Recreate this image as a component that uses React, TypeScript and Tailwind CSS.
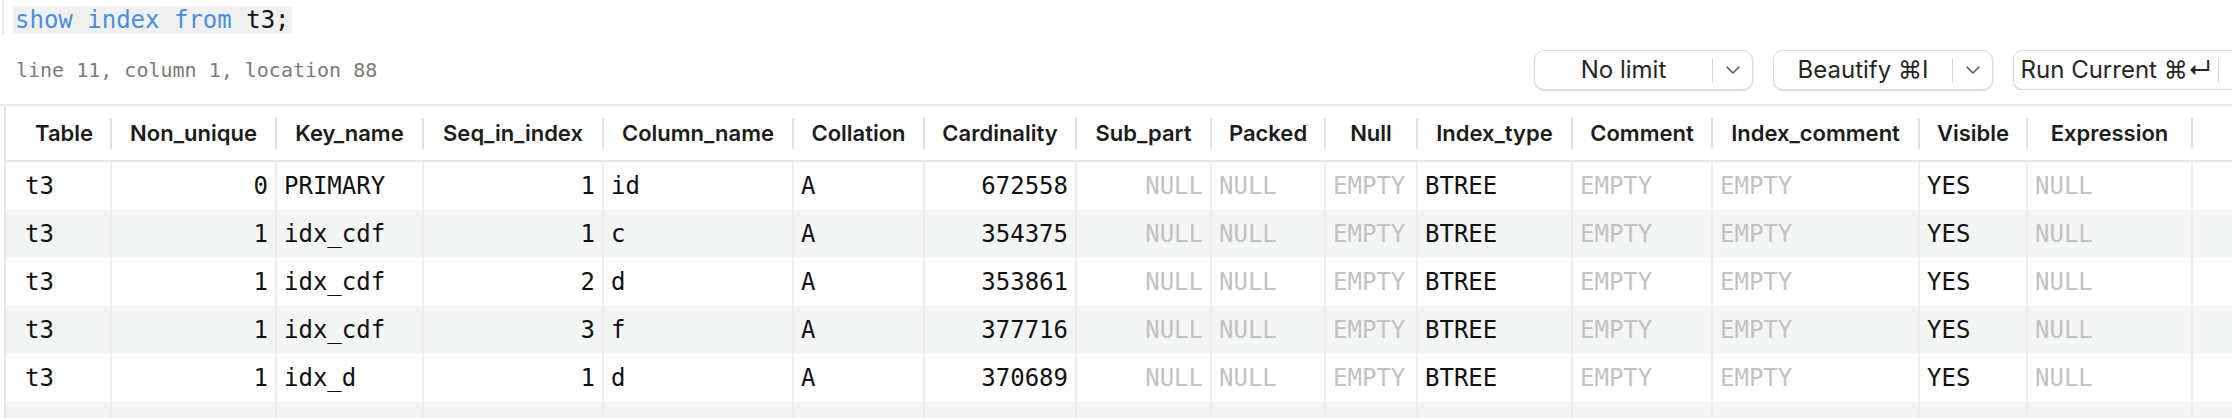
import React from "react"

const MONO = "[font-family:'DejaVu_Sans_Mono',monospace]"

type Col = { name: string; w: string; right?: boolean }

const columns: Col[] = [
  { name: "Table", w: "w-[94px]" },
  { name: "Non_unique", w: "w-[165px]", right: true },
  { name: "Key_name", w: "w-[147px]" },
  { name: "Seq_in_index", w: "w-[180px]", right: true },
  { name: "Column_name", w: "w-[190px]" },
  { name: "Collation", w: "w-[131px]" },
  { name: "Cardinality", w: "w-[152px]", right: true },
  { name: "Sub_part", w: "w-[135px]", right: true },
  { name: "Packed", w: "w-[114px]" },
  { name: "Null", w: "w-[92px]" },
  { name: "Index_type", w: "w-[155px]" },
  { name: "Comment", w: "w-[140px]" },
  { name: "Index_comment", w: "w-[207px]" },
  { name: "Visible", w: "w-[108px]" },
  { name: "Expression", w: "w-[165px]" },
]

// null -> NULL, "" -> EMPTY
const rows: (string | null)[][] = [
  ["t3", "0", "PRIMARY", "1", "id", "A", "672558", null, null, "", "BTREE", "", "", "YES", null],
  ["t3", "1", "idx_cdf", "1", "c", "A", "354375", null, null, "", "BTREE", "", "", "YES", null],
  ["t3", "1", "idx_cdf", "2", "d", "A", "353861", null, null, "", "BTREE", "", "", "YES", null],
  ["t3", "1", "idx_cdf", "3", "f", "A", "377716", null, null, "", "BTREE", "", "", "YES", null],
  ["t3", "1", "idx_d", "1", "d", "A", "370689", null, null, "", "BTREE", "", "", "YES", null],
]

function Chevron() {
  return (
    <svg width="16" height="10" viewBox="0 0 16 10" fill="none">
      <polyline points="2,2 8,8 14,2" stroke="#5a5a5a" strokeWidth="1.6" strokeLinecap="round" strokeLinejoin="round" />
    </svg>
  )
}

function SplitButton({ label, mainW }: { label: string; mainW: string }) {
  return (
    <div className="flex h-[40px] shrink-0 items-center rounded-[10px] border border-[#d9d9d9] bg-white shadow-[0_1px_2px_rgba(0,0,0,0.14)]">
      <span className={`${mainW} text-center text-[24px] text-[#262626] [font-family:Inter,'DejaVu_Sans',sans-serif]`}>{label}</span>
      <div className="h-[24px] w-[1px] bg-[#d6d6d6]" />
      <div className="flex w-[39px] items-center justify-center">
        <Chevron />
      </div>
    </div>
  )
}

export default function App() {
  return (
    <div className="h-[418px] w-[2232px] overflow-hidden bg-white">
      {/* editor + toolbar */}
      <div className="flex h-[104px] flex-col">
        <div className="flex h-[50px]">
          <div className="ml-[2px] h-[34px] w-[2px] bg-[#e8e8e8]" />
          <div className={`ml-[9px] mt-[6px] h-[28px] bg-[#f0f0f0] px-[2px] text-[24px] leading-[28px] ${MONO}`}>
            <span className="text-[#4a8fd8]">show index from</span>
            <span className="text-[#111]"> t3;</span>
          </div>
        </div>
        <div className="flex h-[40px] items-center">
          <span className={`ml-[16px] flex-1 text-[20px] text-[#7a7a7a] ${MONO}`}>line 11, column 1, location 88</span>
          <div className="flex shrink-0 items-center gap-[20px]">
            <SplitButton label="No limit" mainW="w-[177px]" />
            <SplitButton label="Beautify ⌘I" mainW="w-[178px]" />
            <div className="w-[219px] shrink-0 overflow-hidden">
              <div className="w-[260px]">
                <SplitButton label="Run Current ⌘↵" mainW="w-[204px]" />
              </div>
            </div>
          </div>
        </div>
      </div>

      {/* result grid */}
      <div className="border-t-2 border-[#e9e9e9]">
        <div className="ml-[4px] border-l-2 border-[#e6e6e6]">
          <div className="flex h-[56px] border-b-2 border-[#e6e6e6] text-[22px] font-semibold text-[#1c1c1c] [font-family:Inter,sans-serif]">
            <div className="w-[12px] shrink-0" />
            {columns.map((c) => (
              <div key={c.name} className={`flex h-full shrink-0 items-center ${c.w}`}>
                <span className="flex-1 text-center">{c.name}</span>
                <div className="h-[31px] w-[2px] bg-[#e2e2e2]" />
              </div>
            ))}
          </div>
          {[...rows, null].map((row, i) => (
            <div key={i} className={`flex h-[48px] text-[24px] leading-[48px] ${MONO} ${i % 2 === 1 ? "bg-[#f4f5f5]" : "bg-white"}`}>
              <div className="w-[12px] shrink-0" />
              {columns.map((c, j) => {
                const v = row ? row[j] : undefined
                const muted = v === null || v === ""
                const text = v === null ? "NULL" : v === "" ? "EMPTY" : v ?? ""
                return (
                  <div
                    key={c.name}
                    className={`h-full shrink-0 overflow-hidden whitespace-nowrap border-r-2 border-[#eeeeee] px-[7px] ${c.w} ${c.right ? "text-right" : "text-left"} ${muted ? "text-[#c2c2c2]" : "text-[#111]"}`}
                  >
                    {text}
                  </div>
                )
              })}
            </div>
          ))}
        </div>
      </div>
    </div>
  )
}
